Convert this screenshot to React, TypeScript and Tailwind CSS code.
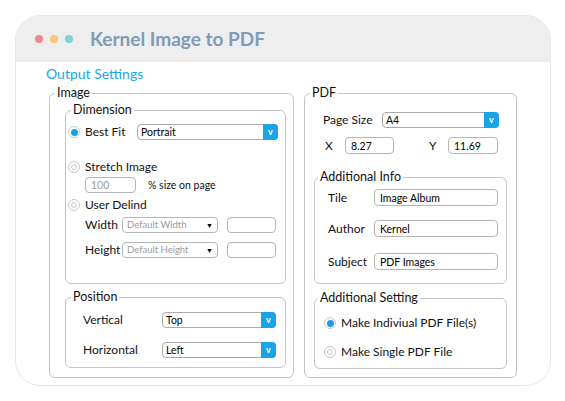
import { ReactNode } from "react";

function Group({
  title,
  className,
  legendClass = "ml-[5px]",
  children,
}: {
  title: string;
  className: string;
  legendClass?: string;
  children: ReactNode;
}) {
  return (
    <fieldset
      className={`border border-[#c4c4c4] rounded-[6px] p-0 m-0 min-w-0 ${className}`}
    >
      <legend
        className={`px-[2px] text-[12.5px] leading-[16px] text-[#111] ${legendClass}`}
      >
        {title}
      </legend>
      {children}
    </fieldset>
  );
}

function Select({ value, className }: { value: string; className: string }) {
  return (
    <div
      className={`flex h-[16px] border border-[#a9a9a9] rounded-[4px] ${className}`}
    >
      <span className="flex-1 pl-[3px] text-[10.5px] leading-[14px] text-black">
        {value}
      </span>
      <span className="w-[15px] -my-px -mr-px bg-[#1ba3e8] rounded-r-[4px] flex items-center justify-center text-white text-[9px] font-bold">
        v
      </span>
    </div>
  );
}

function MiniSelect({ value }: { value: string }) {
  return (
    <div className="flex items-center h-[16px] w-[96px] border border-[#b5b5b5] rounded-[4px] px-[4px]">
      <span className="flex-1 text-[9.5px] text-[#9c9c9c]">{value}</span>
      <span className="text-[7px] text-black">▼</span>
    </div>
  );
}

function Input({
  value = "",
  muted,
  className,
}: {
  value?: string;
  muted?: boolean;
  className: string;
}) {
  return (
    <div
      className={`flex items-center border border-[#b5b5b5] rounded-[4px] px-[5px] text-[10.5px] ${
        muted ? "text-[#9c9c9c]" : "text-black"
      } ${className}`}
    >
      {value}
    </div>
  );
}

function Radio({ checked, label }: { checked?: boolean; label: string }) {
  return (
    <div className="flex items-center h-[16px]">
      <span className="w-[12px] h-[12px] rounded-full border border-[#c9c9c9] flex items-center justify-center">
        {checked ? (
          <span className="w-[7px] h-[7px] rounded-full bg-[#1a9fe6]" />
        ) : (
          <span className="w-[6px] h-[6px] rounded-full border border-[#c9c9c9]" />
        )}
      </span>
      <span className="ml-[5px] text-[12px] text-[#111]">{label}</span>
    </div>
  );
}

export default function App() {
  return (
    <div className="w-[565px] h-[401px] bg-white font-['Lato',sans-serif] leading-[16px] pt-[15px] pl-[15px]">
      <div className="w-[536px] h-[371px] rounded-[25px] border border-[#e8e8e8] overflow-hidden flex flex-col">
        <div className="h-[46px] bg-[#eeeeee] flex items-center pl-[19px]">
          <div className="flex gap-[7px]">
            <span className="w-[8px] h-[8px] rounded-full bg-[#f4848f]" />
            <span className="w-[8px] h-[8px] rounded-full bg-[#fbc775]" />
            <span className="w-[8px] h-[8px] rounded-full bg-[#7fd4dc]" />
          </div>
          <h1 className="ml-[17px] text-[19px] leading-[24px] font-bold text-[#7e9bb8]">
            Kernel Image to PDF
          </h1>
        </div>

        <div className="flex-1">
          <div className="pl-[30px] pt-[3px] text-[14px] leading-[18px] text-[#1ca5e8]">
            Output Settings
          </div>

          <div className="flex gap-[10px] pl-[33px] mt-[2px]">
            {/* Image */}
            <Group title="Image" className="w-[245px] h-[293px]">
              <Group
                title="Dimension"
                className="ml-[15px] mt-px w-[221px] h-[182px]"
              >
                <div className="flex flex-col pl-[2px]">
                  <div className="flex items-center mt-[6px]">
                    <Radio checked label="Best Fit" />
                    <Select value="Portrait" className="ml-auto mr-[7px] w-[141px]" />
                  </div>
                  <div className="mt-[19px]">
                    <Radio label="Stretch Image" />
                  </div>
                  <div className="flex items-center mt-[2px] pl-[17px]">
                    <Input value="100" muted className="w-[51px] h-[16px]" />
                    <span className="ml-[12px] text-[10.5px] text-[#111]">
                      % size on page
                    </span>
                  </div>
                  <div className="mt-[4px]">
                    <Radio label="User Delind" />
                  </div>
                  <div className="flex items-center mt-[4px] pl-[17px]">
                    <span className="w-[37px] text-[12px] text-[#111]">Width</span>
                    <MiniSelect value="Default Width" />
                    <Input className="ml-[9px] w-[49px] h-[16px]" />
                  </div>
                  <div className="flex items-center mt-[9px] pl-[17px]">
                    <span className="w-[37px] text-[12px] text-[#111]">Height</span>
                    <MiniSelect value="Default Height" />
                    <Input className="ml-[9px] w-[49px] h-[16px]" />
                  </div>
                </div>
              </Group>

              <Group
                title="Position"
                className="ml-[15px] mt-[5px] w-[221px] h-[79px]"
              >
                <div className="flex items-center mt-[7px] pl-[17px]">
                  <span className="w-[79px] text-[12px] text-[#111]">Vertical</span>
                  <Select value="Top" className="w-[114px]" />
                </div>
                <div className="flex items-center mt-[14px] pl-[17px]">
                  <span className="w-[79px] text-[12px] text-[#111]">Horizontal</span>
                  <Select value="Left" className="w-[114px]" />
                </div>
              </Group>
            </Group>

            {/* PDF */}
            <Group title="PDF" className="w-[213px] h-[293px]">
              <div className="flex items-center mt-[11px] pl-[18px]">
                <span className="w-[59px] text-[12px] text-[#111]">Page Size</span>
                <Select value="A4" className="w-[117px]" />
              </div>
              <div className="flex items-center mt-[9px] pl-[20px]">
                <span className="w-[20px] text-[12px] text-[#111]">X</span>
                <Input value="8.27" className="w-[49px] h-[17px]" />
                <span className="ml-[35px] w-[19px] text-[12px] text-[#111]">Y</span>
                <Input value="11.69" className="w-[50px] h-[17px]" />
              </div>

              <Group
                title="Additional Info"
                legendClass="ml-[3px]"
                className="ml-[9px] mt-[15px] w-[193px] h-[115px]"
              >
                <div className="flex items-center mt-[4px] pl-[13px]">
                  <span className="w-[46px] text-[12px] text-[#111]">Tile</span>
                  <Input value="Image Album" className="w-[124px] h-[17px] px-[4px]" />
                </div>
                <div className="flex items-center mt-[14px] pl-[13px]">
                  <span className="w-[46px] text-[12px] text-[#111]">Author</span>
                  <Input value="Kernel" className="w-[124px] h-[17px] px-[4px]" />
                </div>
                <div className="flex items-center mt-[16px] pl-[13px]">
                  <span className="w-[46px] text-[12px] text-[#111]">Subject</span>
                  <Input value="PDF Images" className="w-[124px] h-[17px] px-[4px]" />
                </div>
              </Group>

              <Group
                title="Additional Setting"
                legendClass="ml-[3px]"
                className="ml-[9px] mt-[6px] w-[193px] h-[79px]"
              >
                <div className="flex flex-col pl-[9px]">
                  <div className="mt-[9px]">
                    <Radio checked label="Make Indiviual PDF File(s)" />
                  </div>
                  <div className="mt-[13px]">
                    <Radio label="Make Single PDF File" />
                  </div>
                </div>
              </Group>
            </Group>
          </div>
        </div>
      </div>
    </div>
  );
}
